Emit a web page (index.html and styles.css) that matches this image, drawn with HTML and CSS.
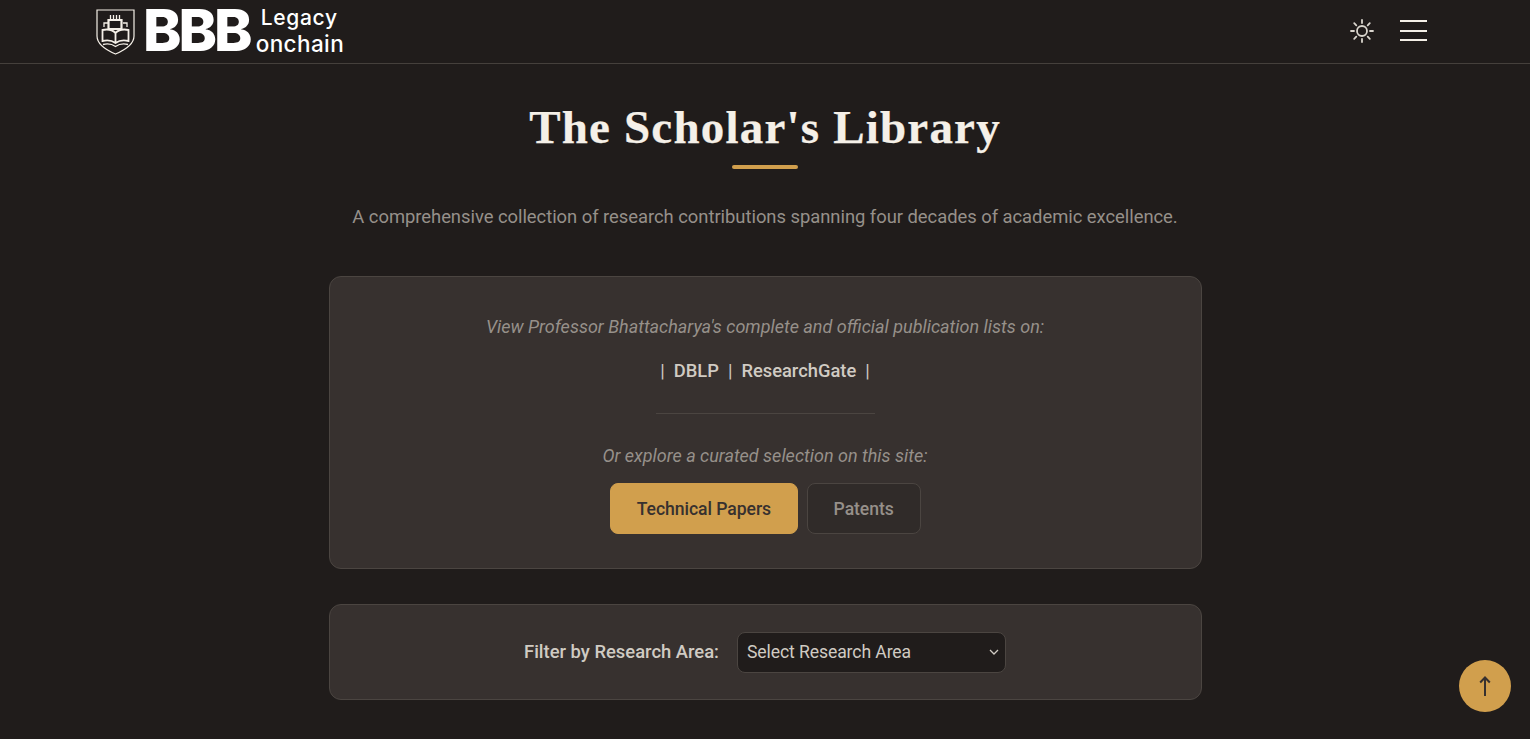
FILE: index.html
```html
<!DOCTYPE html>
<html lang="en">
<head>
<meta charset="utf-8">
<title>The Scholar's Library</title>
<link rel="stylesheet" href="styles.css">
</head>
<body>
<header class="site-header">
  <a class="logo" href="#">
    <svg class="crest" viewBox="0 0 39 46" width="39" height="46" fill="none" stroke="#f5f0e8">
      <path d="M1 1H38V27C38 35 29 41 19.500 45C10 41 1 35 1 27Z" stroke-width="1.200"/>
      <path d="M12.500 11h13v9h-13z" stroke-width="2.200"/>
      <path d="M14.500 11V6M17.500 11V6M20.500 11V6M23.500 11V6M12 14H8v4M27 14h4v4" stroke-width="1.300"/>
      <path d="M19.500 24C16 20.500 11 20 6.500 21V32C11 31 16 31.500 19.500 34C23 31.500 28 31 32.500 32V21C28 20 23 20.500 19.500 24ZM19.500 24V34" stroke-width="1.800"/>
      <path d="M7 35.500C11 34.500 16 35 19.500 37.500C23 35 28 34.500 32 35.500" stroke-width="1.300"/>
    </svg>
    <span class="logo-bbb">BBB</span>
    <span class="logo-words">
      <span class="logo-legacy">Legacy</span>
      <span class="logo-onchain">onchain</span>
    </span>
  </a>
  <div class="header-actions">
    <button class="icon-btn" aria-label="Toggle theme">
      <svg viewBox="0 0 24 24" width="24" height="24" fill="none" stroke="#d9d5cd" stroke-width="1.800" stroke-linecap="round">
        <circle cx="12" cy="12" r="5"/>
        <path d="M12 1v3M12 20v3M1 12h3M20 12h3M4.200 4.200l2.100 2.100M17.700 17.700l2.100 2.100M4.200 19.800l2.100-2.100M17.700 6.300l2.100-2.100"/>
      </svg>
    </button>
    <button class="menu-btn" aria-label="Menu"><span></span><span></span><span></span></button>
  </div>
</header>
<main class="page">
  <h1 class="title">The Scholar's Library</h1>
  <div class="title-rule"></div>
  <p class="lead">A comprehensive collection of research contributions spanning four decades of academic excellence.</p>
  <section class="card card-links">
    <p class="note">View Professor Bhattacharya's complete and official publication lists on:</p>
    <div class="links">
      <span class="sep">|</span><a href="#">DBLP</a><span class="sep">|</span><a href="#">ResearchGate</a><span class="sep">|</span>
    </div>
    <div class="divider"></div>
    <p class="note note-second">Or explore a curated selection on this site:</p>
    <div class="tabs">
      <button class="tab tab-active">Technical Papers</button>
      <button class="tab">Patents</button>
    </div>
  </section>
  <section class="card card-filter">
    <label class="filter-label" for="area">Filter by Research Area:</label>
    <select class="filter-select" id="area"><option>Select Research Area</option></select>
  </section>
</main>
<button class="to-top" aria-label="Back to top">
  <svg viewBox="0 0 12 20" width="12" height="20" fill="none" stroke="#37312f" stroke-width="2">
    <path d="M6 20V1.500M1.200 6.500L6 1.500l4.800 5"/>
  </svg>
</button>
</body>
</html>
```
FILE: styles.css
```css
* { box-sizing: border-box; }
html, body { margin: 0; height: 100%; overflow: hidden; }
body { background: #201c1b; color: #f5f0e8; font-family: Roboto, sans-serif; }
.site-header { height: 64px; border-bottom: 1px solid #45403c; display: flex; align-items: center; justify-content: space-between; padding: 0 103px 0 96px; }
.logo { display: flex; align-items: center; color: #fff; text-decoration: none; height: 63px; }
.crest { width: 39px; height: 46px; margin-right: 8px; }
.logo-bbb { font-family: Inter, sans-serif; font-weight: 800; font-size: 58px; letter-spacing: -3px; line-height: 63px; margin-top: -2px; padding-right: 3px; }
.logo-words { display: flex; flex-direction: column; font-family: Inter, sans-serif; font-weight: 500; line-height: 1; }
.logo-legacy { margin-left: 8px; font-size: 21px; letter-spacing: .7px; }
.logo-onchain { margin-left: 3px; margin-top: 5px; font-size: 22.500px; letter-spacing: .4px; }
.header-actions { display: flex; align-items: center; gap: 26px; margin-bottom: 2px; }
.icon-btn { background: none; border: 0; padding: 0; width: 24px; height: 24px; display: block; }
.menu-btn { background: none; border: 0; padding: 0; width: 27px; height: 21px; display: flex; flex-direction: column; justify-content: space-between; }
.menu-btn span { display: block; height: 2px; width: 100%; background: #f5f0e8; }
.page { width: 873px; margin: 0 auto; display: flex; flex-direction: column; align-items: center; }
.title { font-family: "Liberation Serif", serif; font-weight: 700; font-size: 47px; letter-spacing: 1.200px; line-height: 54px; margin: 36px 0 0; color: #f5f0e8; -webkit-text-stroke: .25px #f5f0e8; }
.title-rule { width: 66px; height: 4px; border-radius: 2px; background: #d19f4d; margin-top: 11px; }
.lead { font-size: 18.400px; letter-spacing: -.03px; line-height: 27px; color: #96908a; margin: 34px 0 0; white-space: nowrap; }
.card { width: 100%; background: #37312f; border: 1px solid #4b4541; border-radius: 12px; }
.card-links { margin-top: 46px; height: 293px; display: flex; flex-direction: column; align-items: center; padding-top: 38px; }
.note { margin: 0; font-style: italic; font-size: 18px; line-height: 24px; color: #96908a; }
.links { display: flex; align-items: center; gap: 9px; margin-top: 19px; height: 24px; font-size: 18.340px; font-weight: 500; }
.links a { color: #d0cbc3; text-decoration: none; }
.sep { color: #d0cbc3; font-weight: 400; }
.divider { width: 219px; height: 1px; background: #4b4541; margin-top: 31px; }
.note-second { margin-top: 30px; }
.tabs { display: flex; gap: 9px; margin-top: 15px; margin-left: 1px; }
.tab { font-family: Roboto, sans-serif; font-size: 17.600px; letter-spacing: -.06px; font-weight: 500; height: 51px; padding: 0 26px; border-radius: 8px; border: 1px solid #4b4541; background: #302b29; color: #96908a; }
.tab-active { background: #d19f4d; border-color: #d19f4d; color: #37312f; padding: 0 25.500px; }
.card-filter { margin-top: 35px; height: 96px; display: flex; align-items: center; justify-content: center; gap: 18px; }
.filter-label { font-size: 18.400px; font-weight: 500; color: #d0cbc3; margin-bottom: 2px; }
.filter-select { appearance: none; width: 269px; height: 41px; background: #201c1b url("data:image/svg+xml,%3Csvg xmlns='http://www.w3.org/2000/svg' width='10' height='7' viewBox='0 0 10 7'%3E%3Cpath d='M1 1l4 4 4-4' fill='none' stroke='%23d0cbc3' stroke-width='1.300'/%3E%3C/svg%3E") no-repeat right 6px center; color: #d0cbc3; border: 1px solid #4b4541; border-radius: 8px; font-family: Roboto, sans-serif; font-size: 17.600px; letter-spacing: -.1px; padding: 0 9px; }
.to-top { position: fixed; right: 19px; bottom: 27px; width: 52px; height: 52px; border-radius: 50%; border: 0; background: #d19f4d; padding: 0; display: flex; align-items: center; justify-content: center; }
```
